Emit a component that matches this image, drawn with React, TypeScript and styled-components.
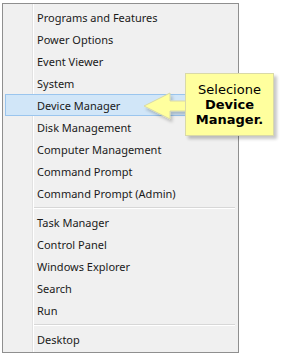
import * as React from 'react';
import styled, { createGlobalStyle } from 'styled-components';

const GlobalStyle = createGlobalStyle`
  html, body {
    margin: 0;
    padding: 0;
    background: #ffffff;
  }
`;

const Page = styled.div`
  position: relative;
  width: 285px;
  height: 355px;
  padding: 3px 0 0 2px;
  box-sizing: border-box;
`;

const Menu = styled.div`
  position: relative;
  width: 237px;
  height: 350px;
  box-sizing: border-box;
  border: 1px solid #8f8f8f;
  background: #f0f0f0;
  padding: 2px 1px 1px 1px;
  display: flex;
  flex-direction: column;
  font-family: 'Segoe UI', 'Noto Sans', sans-serif;
  font-size: 11px;
  color: #1a1a1a;

  &::before {
    content: '';
    position: absolute;
    top: 0;
    bottom: 0;
    left: 29px;
    width: 1px;
    background: #e2e2e2;
    border-right: 1px solid #ffffff;
  }
`;

const Item = styled.div<{ $active?: boolean }>`
  position: relative;
  height: 22px;
  display: flex;
  align-items: center;
  padding-left: 31px;
  margin: 0 1px;
  box-sizing: border-box;
  border: 1px solid ${({ $active }) => ($active ? '#9ac5ee' : 'transparent')};
  background: ${({ $active }) => ($active ? '#d1e6f8' : 'transparent')};
  white-space: nowrap;
`;

const Separator = styled.div`
  height: 7px;
  display: flex;
  align-items: center;
  padding-left: 30px;
  padding-right: 2px;

  &::after {
    content: '';
    flex: 1;
    height: 1px;
    background: #d7d7d7;
    border-bottom: 1px solid #ffffff;
  }
`;

const Callout = styled.div`
  position: absolute;
  left: 185px;
  top: 73px;
  width: 89px;
  height: 63px;
  box-sizing: border-box;
  background: #ffff9e;
  border: 1px solid #d9d9a8;
  box-shadow: 3px 3px 3px rgba(0, 0, 0, 0.22);
  display: flex;
  flex-direction: column;
  align-items: center;
  justify-content: center;
  font-family: Verdana, 'DejaVu Sans', sans-serif;
  font-size: 13px;
  line-height: 15px;
  color: #000;
`;

const Bold = styled.b`
  font-weight: bold;
`;

const Arrow = styled.svg`
  position: absolute;
  left: 142px;
  top: 91px;
  overflow: visible;
`;

const groups = [
  ['Programs and Features', 'Power Options', 'Event Viewer', 'System', 'Device Manager', 'Disk Management', 'Computer Management', 'Command Prompt', 'Command Prompt (Admin)'],
  ['Task Manager', 'Control Panel', 'Windows Explorer', 'Search', 'Run'],
  ['Desktop'],
];

export default function App() {
  return (
    <Page>
      <GlobalStyle />
      <Menu>
        {groups.map((g, gi) => (
          <React.Fragment key={gi}>
            {gi > 0 && <Separator />}
            {g.map((label) => (
              <Item key={label} $active={label === 'Device Manager'}>
                {label}
              </Item>
            ))}
          </React.Fragment>
        ))}
      </Menu>
      <Arrow width="46" height="32" viewBox="0 0 46 32">
        <defs>
          <filter id="sh" x="-20%" y="-20%" width="150%" height="150%">
            <feDropShadow dx="2" dy="3" stdDeviation="1.5" floodColor="#000" floodOpacity="0.2" />
          </filter>
        </defs>
        <path
          d="M2 15 L28 2 L28 10 L45 10 L45 20 L28 20 L28 28 Z"
          fill="#ffff9e"
          stroke="#d9d9a8"
          strokeWidth="1"
          filter="url(#sh)"
        />
      </Arrow>
      <Callout>
        <span>Selecione</span>
        <Bold>Device</Bold>
        <Bold>Manager.</Bold>
      </Callout>
    </Page>
  );
}
